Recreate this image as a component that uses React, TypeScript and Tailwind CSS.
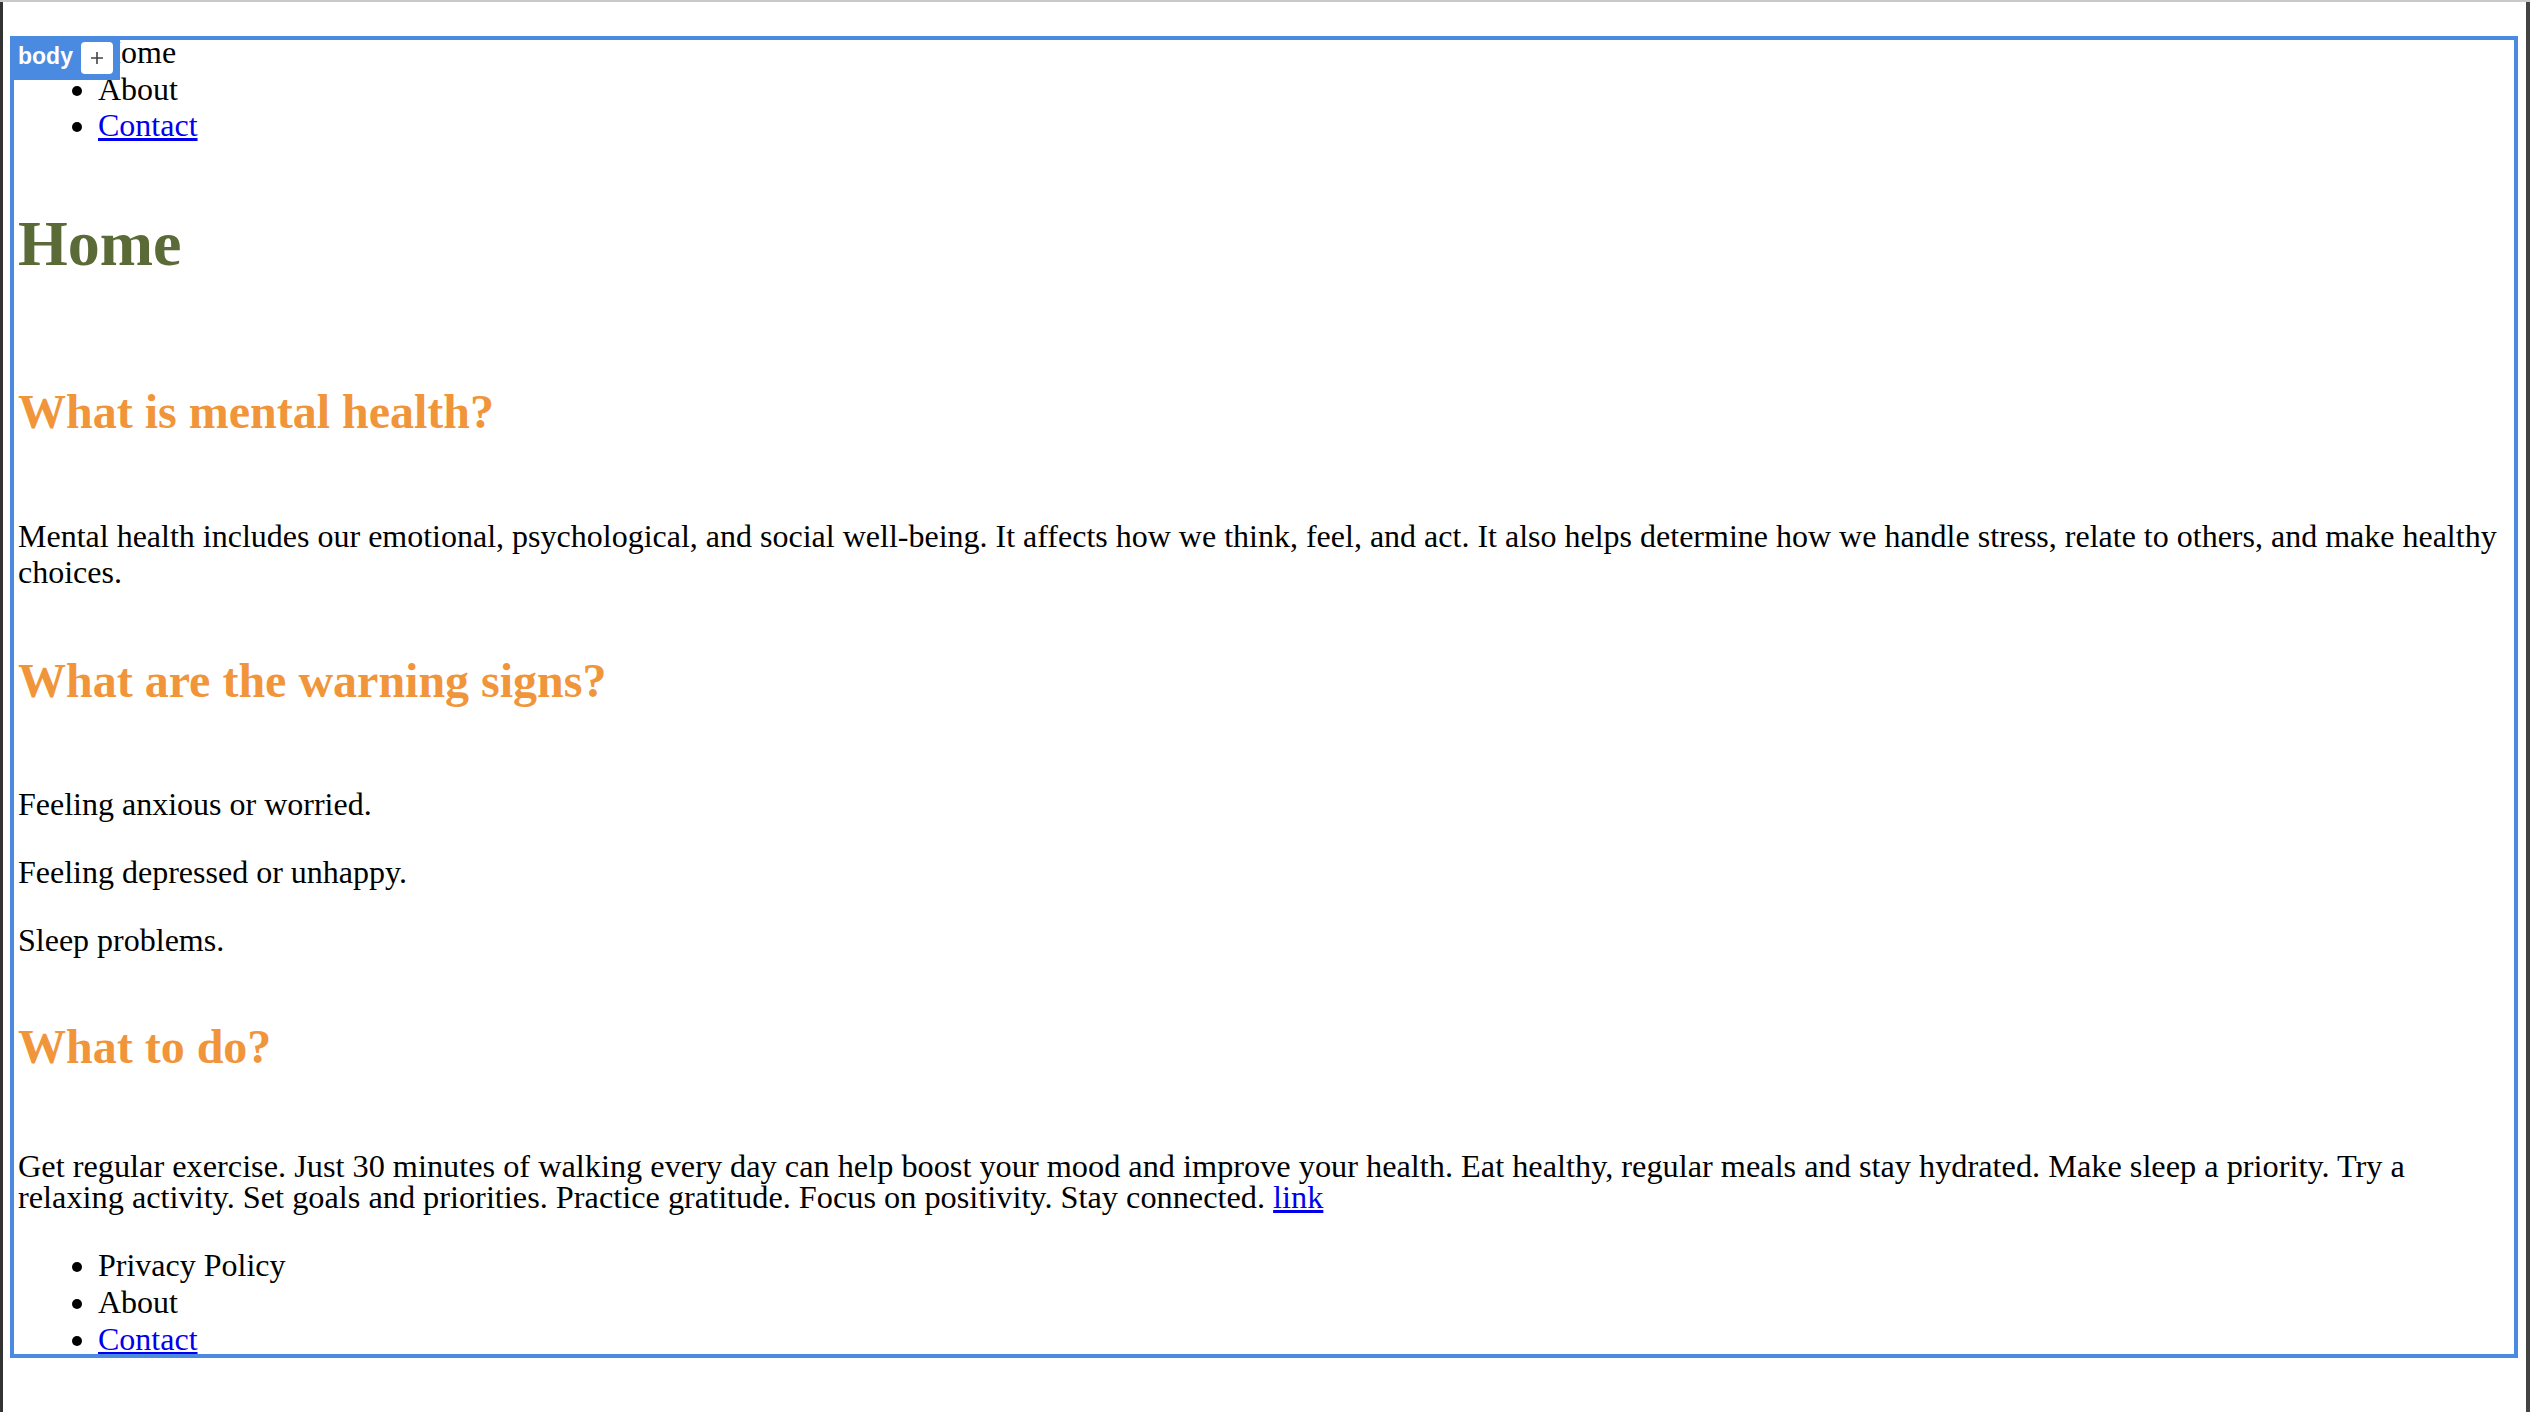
const serif = "font-['Liberation_Serif','Times_New_Roman',serif]"

function NavList({ items }: { items: { label: string, href?: string }[] }) {
    return (
        <ul className="list-disc pl-[80px] text-[32px] leading-[36.8px]">
            {items.map((item) => (
                <li key={item.label}>
                    {item.href ? (
                        <a href={item.href} className="text-[#0000ee] underline">{item.label}</a>
                    ) : (
                        item.label
                    )}
                </li>
            ))}
        </ul>
    )
}

export default function App() {
    return (
        <div className="flex h-[1412px] w-full flex-col overflow-hidden bg-white">
            <div className="h-[2px] bg-[#c9c9c9]" />
            <div className="flex flex-1">
                <div className="w-[3px] bg-[#333333]" />
                <div className={`relative flex-1 text-black ${serif}`}>
                    {/* page preview */}
                    <div className="flex flex-col pl-[15px] pr-[18px]">
                        <div className="mt-[31.8px]">
                            <NavList items={[{ label: "Home" }, { label: "About" }, { label: "Contact", href: "#" }]} />
                        </div>

                        <h1 className="mt-[62.4px] text-[64px] font-bold leading-[73.5px] text-[#5b6b38]">Home</h1>

                        <h2 className="mt-[104px] text-[48px] font-bold leading-[55.2px] text-[#f1953b]">What is mental health?</h2>
                        <p className="mt-[78.4px] text-[32px] leading-[36.8px]">
                            Mental health includes our emotional, psychological, and social well-being. It affects how we think, feel, and act. It also helps determine how we handle stress, relate to others, and make healthy choices.
                        </p>

                        <h2 className="mt-[61.8px] text-[48px] font-bold leading-[55.2px] text-[#f1953b]">What are the warning signs?</h2>
                        <p className="mt-[77.4px] text-[32px] leading-[36.8px]">Feeling anxious or worried.</p>
                        <p className="mt-[31.2px] text-[32px] leading-[36.8px]">Feeling depressed or unhappy.</p>
                        <p className="mt-[32px] text-[32px] leading-[36.8px]">Sleep problems.</p>

                        <h2 className="mt-[59.6px] text-[48px] font-bold leading-[55.2px] text-[#f1953b]">What to do?</h2>
                        <p className="mt-[77.4px] text-[32.3px] leading-[30.5px]">
                            Get regular exercise. Just 30 minutes of walking every day can help boost your mood and improve your health. Eat healthy, regular meals and stay hydrated. Make sleep a priority. Try a relaxing activity. Set goals and priorities. Practice gratitude. Focus on positivity. Stay connected.{" "}
                            <a href="#" className="text-[#0000ee] underline">link</a>
                        </p>

                        <div className="mt-[35px]">
                            <NavList items={[{ label: "Privacy Policy" }, { label: "About" }, { label: "Contact", href: "#" }]} />
                        </div>
                    </div>

                    {/* editor selection outline over the body element */}
                    <div className="pointer-events-none absolute left-[7px] top-[34px] h-[1322px] w-[2508px] border-4 border-[#4a8ae0]" />
                    <div className="absolute left-[7px] top-[34px] flex h-[44px] w-[110px] items-start gap-[8px] bg-[#4a8ae0] pl-[8px]">
                        <span className="pt-[7px] font-['Liberation_Sans',Arial,sans-serif] text-[23px] font-bold leading-[26px] text-white">body</span>
                        <div className="mt-[6px] flex h-[32px] w-[32px] items-center justify-center rounded-[4px] bg-white">
                            <svg width="32" height="32" viewBox="0 0 32 32" fill="none" stroke="#444444" strokeWidth="1.6">
                                <path d="M16 10v12M10 16h12" />
                            </svg>
                        </div>
                    </div>
                </div>
                <div className="w-[4px] bg-[#444444]" />
            </div>
        </div>
    )
}
